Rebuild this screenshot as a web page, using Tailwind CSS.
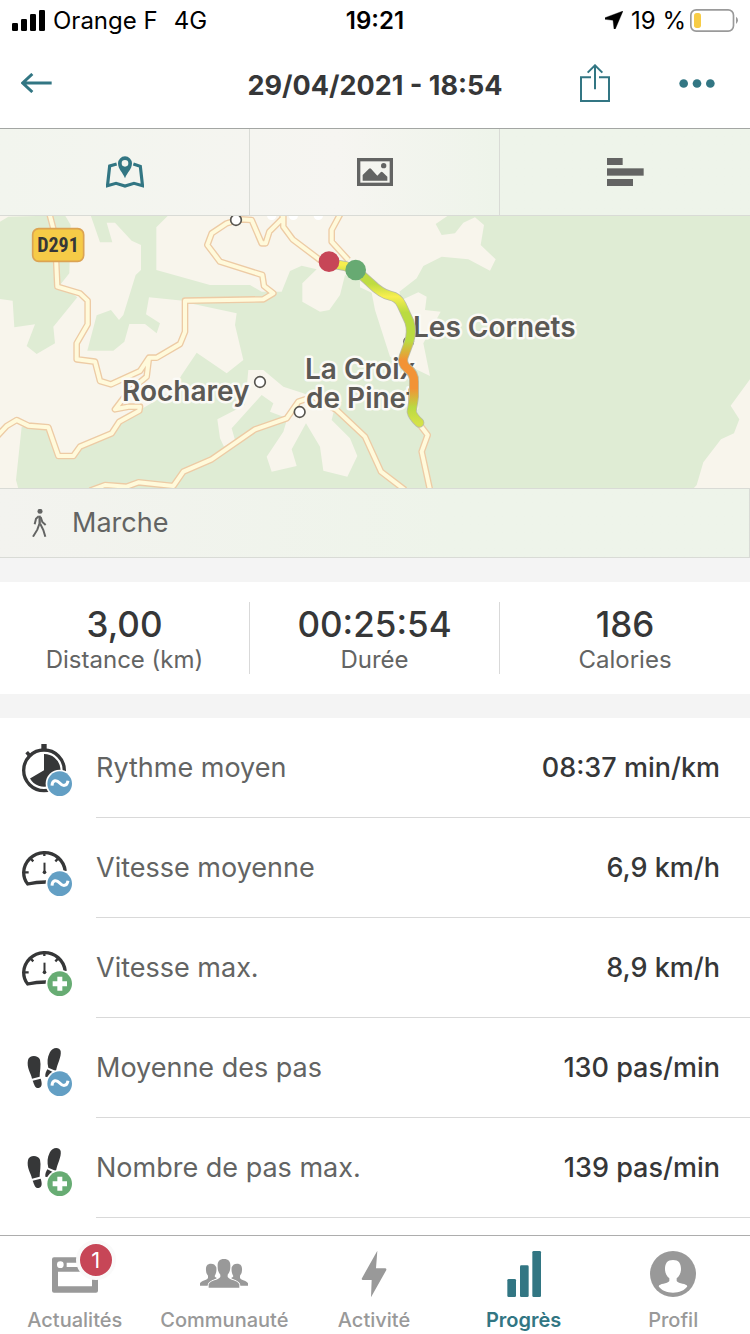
<!DOCTYPE html>
<html lang="fr">
<head>
<meta charset="utf-8">
<meta name="viewport" content="width=device-width, initial-scale=1">
<title>29/04/2021 - 18:54</title>
<script src="https://cdn.jsdelivr.net/npm/@tailwindcss/browser@4"></script>
</head>
<body class="flex h-screen flex-col overflow-hidden bg-white font-['Inter','Liberation_Sans',sans-serif] text-[#363738]">

<!-- Shared symbols -->
<svg class="hidden" aria-hidden="true">
  <symbol id="avg" viewBox="63 78 156 156">
    <circle cx="179" cy="197" r="42" fill="#fff"/>
    <circle cx="179" cy="197" r="37" fill="#639fc4"/>
    <path d="M156 203C157 185 170 185 179 195S201 206 204 188" fill="none" stroke="#fff" stroke-width="9"/>
  </symbol>
  <symbol id="plus" viewBox="63 78 156 156">
    <circle cx="179" cy="197" r="42" fill="#fff"/>
    <circle cx="179" cy="197" r="37" fill="#67ac73"/>
    <path d="M158 197H201M179.500 176V218" stroke="#fff" stroke-width="15"/>
  </symbol>
  <symbol id="gauge" viewBox="63 78 156 156">
    <g fill="none" stroke="#363738">
      <path d="M195.500 159A62.500 62.500 0 0 0 71 163C71 178 76 190 83 198C100 194 120 192 138 192" stroke-width="10"/>
      <path d="M133 100V114M72 163H86M92 122L100 130M174 122L166 130" stroke-width="7"/>
      <path d="M133.500 134V164" stroke-width="6"/>
    </g>
    <circle cx="133.500" cy="163" r="5.500" fill="#363738"/>
  </symbol>
  <symbol id="steps" viewBox="63 78 156 156">
    <g fill="#363738">
      <path d="M84 126C87 111 114 110 120 125C124 142 119 160 119 176L96 182C93 165 79 150 84 126Z"/>
      <path d="M98 188L122 182C126 194 128 207 116 210C104 211 103 199 98 188Z"/>
      <path d="M149 104C156 87 178 85 182 99C185 117 171 138 168 159L145 149C141 132 142 117 149 104Z"/>
      <path d="M142 154L158 162L144 178L136 176C135 167 138 161 142 154Z"/>
    </g>
  </symbol>
</svg>

<!-- Status bar -->
<div class="grid h-10 shrink-0 grid-cols-[1fr_auto_1fr] items-center px-3 text-2xl leading-6 text-black">
  <div class="flex items-center gap-2">
    <svg class="h-[21px] w-[33px]" viewBox="39 27 99 63"><rect x="39" y="66" width="18" height="24" rx="4"/><rect x="66" y="54" width="18" height="36" rx="4"/><rect x="93" y="39" width="18" height="51" rx="4"/><rect x="120" y="27" width="18" height="63" rx="4"/></svg>
    <span class="mt-0.5">Orange F</span>
    <span class="mt-0.5 ml-2">4G</span>
  </div>
  <span class="mt-0.5 font-semibold">19:21</span>
  <div class="flex items-center justify-end gap-1">
    <svg class="mr-1 h-[18px] w-[18px]" viewBox="688 36 54 54"><path d="M742 36L688 56V61L712 64L715 90H719Z" stroke="#000" stroke-width="1" stroke-linejoin="round"/></svg>
    <span class="mt-0.5">19 %</span>
    <svg class="h-[23px] w-12" viewBox="948 24 144 69"><rect x="950.500" y="26.500" width="128" height="64" rx="16" fill="none" stroke="#9a9a9a" stroke-width="5"/><rect x="960" y="36" width="21" height="45" rx="8" fill="#f7cc46"/><path d="M1086 47Q1092 51 1092 58T1086 69Z" fill="#9a9a9a"/></svg>
  </div>
</div>

<!-- Header -->
<header class="grid h-[88px] shrink-0 grid-cols-[1fr_auto_1fr] items-center px-[21px] pb-0.5">
  <button class="justify-self-start" aria-label="Retour"><svg class="h-5 w-8" viewBox="63 223 96 60"><path d="M155 253H69M97 226L68 253L97 280" fill="none" stroke="#327683" stroke-width="9"/></svg></button>
  <h1 class="mt-1.5 text-[27px] leading-8 font-bold">29/04/2021 - 18:54</h1>
  <div class="mr-3.5 flex items-center justify-end gap-[69px]">
    <button aria-label="Partager"><svg class="h-[38px] w-[30px]" viewBox="615 189 90 114"><path d="M648 228.500H618V300H702V228.500H672M660 265V193M638 215L660 193L682 215" fill="none" stroke="#327683" stroke-width="6"/></svg></button>
    <button aria-label="Plus d’options"><svg class="h-[9px] w-9" viewBox="912 235 108 27"><g fill="#327683"><circle cx="926" cy="248.500" r="13"/><circle cx="966" cy="248.500" r="13"/><circle cx="1006" cy="248.500" r="13"/></g></svg></button>
  </div>
</header>

<main class="flex min-h-0 flex-1 flex-col overflow-hidden bg-[#f4f4f4]">
  <!-- View switch -->
  <div class="grid h-[88px] shrink-0 grid-cols-3 border-y border-t-[#a3a6a3] border-b-[#d9dbd6] bg-linear-to-r from-[#f2f5ee] via-[#f6f5f1] via-45% to-[#eef4ea] to-66%">
    <button class="flex items-center justify-center border-r border-[#d9dbd6]" aria-label="Carte">
      <svg class="h-8 w-[38px]" viewBox="318 90 114 96"><path d="M350 114L329 120L322.500 179L348 172L375 180L402 172L427.500 179L421 121L400 114" fill="none" stroke="#327683" stroke-width="9.500"/><path d="M375 157C368 139 354 129 354 112A21 21 0 0 1 396 112C396 129 382 139 375 157ZM375 102A10 10 0 1 0 375 122A10 10 0 1 0 375 102Z" fill="#327683" fill-rule="evenodd"/></svg>
    </button>
    <button class="flex items-center justify-center border-r border-[#d9dbd6]" aria-label="Photos">
      <svg class="h-7 w-9" viewBox="1071 99 108 84"><rect x="1076" y="104" width="98" height="74" fill="none" stroke="#636463" stroke-width="10"/><path d="M1088 167V150L1107 131Q1110 128 1113 131L1132 152L1142 142Q1145 139 1148 142L1162 155V167Z" fill="#636463"/><circle cx="1151" cy="122" r="8" fill="#636463"/></svg>
    </button>
    <button class="flex items-center justify-center" aria-label="Statistiques">
      <svg class="h-7 w-[37px]" viewBox="696 99 111 84" fill="#636463"><rect x="696" y="99" width="47" height="21"/><rect x="696" y="130" width="110" height="22"/><rect x="696" y="162" width="78" height="21"/></svg>
    </button>
  </div>

  <!-- Map -->
  <svg class="h-[272px] w-full shrink-0 bg-[#f8f5ec]" viewBox="0 6 750 272" preserveAspectRatio="xMidYMid slice" role="img" aria-label="Parcours">
    <defs>
      <linearGradient id="pace" gradientUnits="userSpaceOnUse" x1="0" y1="165" x2="0" y2="640">
        <stop offset="0" stop-color="#f6ee4e"/><stop offset=".06" stop-color="#bfdc42"/><stop offset=".12" stop-color="#bfdc42"/><stop offset=".2" stop-color="#f8ef4f"/><stop offset=".3" stop-color="#badb41"/><stop offset=".48" stop-color="#badb41"/><stop offset=".6" stop-color="#f29335"/><stop offset=".78" stop-color="#f29335"/><stop offset=".9" stop-color="#bada42"/><stop offset="1" stop-color="#d4e248"/>
      </linearGradient>
      <path id="roads" d="M148 10L165 75L172 230L240 250L263 272V343L230 400V448L285 455L300 513L333 523L420 483L447 443H470L540 402L555 365V272L790 268L820 250L792 228L787 195L660 155L622 105L635 70L680 40L720 28L755 30L785 100H797L808 65L848 25V10M850 12V50L878 88L960 150L1000 160M1022 10L995 60V95L1045 150M447 443L440 500L410 525L370 565L345 598L385 590H420L418 602L358 635L335 670L240 710L220 738H175L145 652L85 647L50 630L20 648L-10 680M270 842L315 825L380 830L415 817L520 828L550 785L635 748L765 658L860 625L895 575L940 560L1010 600L1095 680L1143 785L1215 840M1260 645L1283 675L1265 725L1290 840"/>
      <path id="track" d="M990 160L1035 168L1068 180L1110 218Q1145 252 1170 257T1205 285L1228 335Q1238 365 1226 400L1211 440Q1204 460 1222 475Q1243 490 1242 515V560L1235 605Q1238 620 1258 638"/>
    </defs>
    <g transform="scale(.333333)">
      <g fill="#dfecd4">
        <path d="M0 35L25 20L195 16L212 45L208 190L180 225L232 262L160 350L165 400L110 432L80 408L105 343L43 352L38 272L0 267Z"/>
        <path d="M272 16H505L469 52V180L630 225H750L785 245H845L870 183L905 167L950 178L907 220V275L960 305L988 300L1020 255L1035 195L1080 210V232L1115 248L1125 300L1170 440L1290 498L1270 400L1322 305L1275 300L1280 260L1255 247L1205 270L1198 245L1250 205L1270 168L1325 140L1405 148L1470 182L1487 148L1442 105L1452 45L1425 22L1390 38L1365 70L1325 75L1307 42L1345 16H2250V508L2192 587L2218 628L2202 670L2163 688L2110 757L2090 825L2080 836H55L48 810L65 650L145 652L175 738H220L240 710L335 670L358 635L420 600L520 540L545 495L590 428L680 490L730 450L705 345L710 310L580 282L550 272L447 262L438 313L480 340L470 370L435 342H388L373 395L340 422H262L290 316L333 300L357 330L370 315L407 195L423 180V105L395 92L345 38H320L337 97H300Z"/>
      </g>
      <path d="M652 628L735 585L745 480H790L850 530L910 550L1005 590L995 630L1050 685L1072 738L1042 800L970 782L960 710L918 640L875 718L890 768L815 785L800 740L850 665L862 625L810 605L820 580L785 555L695 655L705 690L672 710L660 685Z" fill="#f8f5ec"/>
      <g fill="none" stroke-linejoin="round">
        <use href="#roads" stroke="#edcba5" stroke-width="20"/>
        <use href="#roads" stroke="#fffadb" stroke-width="12"/>
      </g>
      <g fill="#fff" stroke="#56544f" stroke-width="5"><circle cx="708" cy="30" r="16"/><circle cx="780" cy="516" r="16"/><circle cx="899" cy="606" r="16"/><circle cx="1226" cy="395" r="14"/></g>
      <g fill="#fff"><circle cx="815" cy="16" r="14"/><circle cx="880" cy="16" r="14"/><circle cx="955" cy="16" r="14"/></g>
      <rect x="98" y="56" width="153" height="98" rx="18" fill="#f6cb47" stroke="#dba353" stroke-width="5"/>
    </g>
    <g fill="#5b5955" stroke="#fbfaf6" stroke-width="5" stroke-linejoin="round" paint-order="stroke" class="text-[28px] font-semibold">
      <text x="122" y="191">Rocharey</text>
      <text x="413" y="127">Les Cornets</text>
      <text><tspan x="305" y="169">La Croix</tspan><tspan x="306" y="198">de Pinet</tspan></text>
    </g>
    <text x="58" y="42" text-anchor="middle" fill="#363738" class="font-['Liberation_Sans_Narrow','Roboto_Condensed','Roboto',sans-serif] text-[20px] font-bold">D291</text>
    <g transform="scale(.333333)">
      <g fill="none" stroke-linecap="round" stroke-linejoin="round">
        <use href="#track" stroke="#babda5" stroke-width="30"/>
        <use href="#track" stroke="url(#pace)" stroke-width="25"/>
      </g>
      <circle cx="987" cy="155" r="31" fill="#c74657"/>
      <circle cx="1067" cy="180" r="31" fill="#67aa72"/>
    </g>
  </svg>

  <!-- Activity type -->
  <div class="flex h-[70px] shrink-0 items-center gap-[25px] border border-l-0 border-[#d9dbd6] bg-linear-to-r from-[#f3f3ef] to-[#eef4ea] to-60% pl-8 text-[27px] leading-8 text-[#636463]">
    <svg class="h-7 w-[15px]" viewBox="96 88 45 84"><circle cx="120" cy="95" r="7.500" fill="#636463"/><path d="M119 108V134" stroke="#636463" stroke-width="7"/><path d="M116 110L108 117L104 134M122 112L127 127L137 136M118 133L112 150L99 171M121 133L130 151L136 171" fill="none" stroke="#636463" stroke-width="6"/></svg>
    <span>Marche</span>
  </div>

  <!-- Summary -->
  <dl class="mt-6 grid shrink-0 grid-cols-3 bg-white py-5 text-center">
    <div class="flex h-[72px] flex-col-reverse justify-center border-r border-[#d9d9d9]"><dt class="text-2xl leading-7 text-[#636463]">Distance (km)</dt><dd class="text-[35px] leading-11 font-medium">3,00</dd></div>
    <div class="flex h-[72px] flex-col-reverse justify-center border-r border-[#d9d9d9]"><dt class="text-2xl leading-7 text-[#636463]">Durée</dt><dd class="text-[35px] leading-11 font-medium">00:25:54</dd></div>
    <div class="flex h-[72px] flex-col-reverse justify-center"><dt class="text-2xl leading-7 text-[#636463]">Calories</dt><dd class="text-[35px] leading-11 font-medium">186</dd></div>
  </dl>

  <!-- Details -->
  <ul class="mt-6 flex-1 bg-white pl-[21px] text-[27px] leading-8">
    <li class="flex h-[100px] items-center gap-[23px]">
      <svg class="mt-1 size-[52px] shrink-0" viewBox="63 78 156 156"><circle cx="132" cy="157" r="61" fill="none" stroke="#363738" stroke-width="10"/><path d="M132 157V108A49 49 0 1 1 90 181.500ZM124 78H140V98H124ZM76 106L84 99L94 110L86 118Z" fill="#363738"/><use href="#avg" x="63" y="78" width="156" height="156"/></svg>
      <div class="flex h-full flex-1 items-center justify-between border-b border-[#d9d9d9] pr-[30px]"><span class="text-[#636463]">Rythme moyen</span><span class="font-medium">08:37 min/km</span></div>
    </li>
    <li class="flex h-[100px] items-center gap-[23px]">
      <svg class="mt-1 size-[52px] shrink-0" viewBox="0 0 156 156"><use href="#gauge"/><use href="#avg"/></svg>
      <div class="flex h-full flex-1 items-center justify-between border-b border-[#d9d9d9] pr-[30px]"><span class="text-[#636463]">Vitesse moyenne</span><span class="font-medium">6,9 km/h</span></div>
    </li>
    <li class="flex h-[100px] items-center gap-[23px]">
      <svg class="mt-1 size-[52px] shrink-0" viewBox="0 0 156 156"><use href="#gauge"/><use href="#plus"/></svg>
      <div class="flex h-full flex-1 items-center justify-between border-b border-[#d9d9d9] pr-[30px]"><span class="text-[#636463]">Vitesse max.</span><span class="font-medium">8,9 km/h</span></div>
    </li>
    <li class="flex h-[100px] items-center gap-[23px]">
      <svg class="mt-1 size-[52px] shrink-0" viewBox="0 0 156 156"><use href="#steps"/><use href="#avg"/></svg>
      <div class="flex h-full flex-1 items-center justify-between border-b border-[#d9d9d9] pr-[30px]"><span class="text-[#636463]">Moyenne des pas</span><span class="font-medium">130 pas/min</span></div>
    </li>
    <li class="flex h-[100px] items-center gap-[23px]">
      <svg class="mt-1 size-[52px] shrink-0" viewBox="0 0 156 156"><use href="#steps"/><use href="#plus"/></svg>
      <div class="flex h-full flex-1 items-center justify-between border-b border-[#d9d9d9] pr-[30px]"><span class="text-[#636463]">Nombre de pas max.</span><span class="font-medium">139 pas/min</span></div>
    </li>
  </ul>
</main>

<!-- Tab bar -->
<nav class="grid shrink-0 grid-cols-5 border-t border-[#adadad] bg-white pt-3.5 pr-0.5 text-center text-xl leading-7 font-medium text-[#999]">
  <a href="#" class="flex flex-col items-center gap-2">
    <span class="relative">
      <svg class="h-12 w-12" viewBox="150 60 144 144"><path d="M159 82H285Q291 82 291 88V182Q291 188 285 188H159Q153 188 153 182V88Q153 82 159 82ZM171 125V169H273V125ZM197 98V111H280V98ZM178 94A10 10 0 1 0 178 114A10 10 0 1 0 178 94Z" fill="#999" fill-rule="evenodd"/></svg>
      <span class="absolute -top-2.5 left-[25px] size-10 rounded-full border-4 border-[#fafafa] bg-[#c74657] text-[22px] leading-8 font-normal text-white">1</span>
    </span>
    Actualités
  </a>
  <a href="#" class="flex flex-col items-center gap-2">
    <svg class="h-12 w-12" viewBox="603 60 144 144" fill="#999"><path id="side" d="M636 101C624 101 620 109 621 120C621 130 625 134 627 137V144C624 151 606 152 603 160V167H626C630 153 648 150 655 144C650 143 648 142 647 138C652 130 653 122 652 112C648 104 644 101 636 101Z"/><use href="#side" transform="translate(1350 0) scale(-1 1)"/><path d="M675 87C690 87 695 96 694 110C694 122 690 130 686 134V141C692 151 716 150 721 163V173H629V163C634 150 658 151 664 141V134C660 130 656 122 656 110C655 96 660 87 675 87Z" stroke="#fff" stroke-width="5" paint-order="stroke"/></svg>
    Communauté
  </a>
  <a href="#" class="flex flex-col items-center gap-2">
    <svg class="h-12 w-12" viewBox="1053 60 144 144"><path d="M1135 62L1088 146Q1088 150 1092 150H1118L1116 202L1162 120Q1163 115 1158 115H1131Z" fill="#999"/></svg>
    Activité
  </a>
  <a href="#" class="flex flex-col items-center gap-2 font-semibold text-[#327683]" aria-current="page">
    <svg class="h-12 w-12" viewBox="377 60 144 144" fill="#327683"><rect x="399" y="147" width="26" height="54" rx="4"/><rect x="437" y="106" width="26" height="95" rx="4"/><rect x="474" y="63" width="26" height="138" rx="4"/></svg>
    Progrès
  </a>
  <a href="#" class="flex flex-col items-center gap-2">
    <svg class="h-12 w-12" viewBox="825 60 144 144"><circle cx="897" cy="132" r="69" fill="#999"/><path d="M897 90C914 90 921 100 921 117C921 130 916 138 908 145V153C914 162 938 160 940 169C932 182 915 188 897 188S862 182 854 169C856 160 880 162 886 153V145C878 138 873 130 873 117C873 100 880 90 897 90Z" fill="#fff"/></svg>
    Profil
  </a>
</nav>
</body>
</html>
